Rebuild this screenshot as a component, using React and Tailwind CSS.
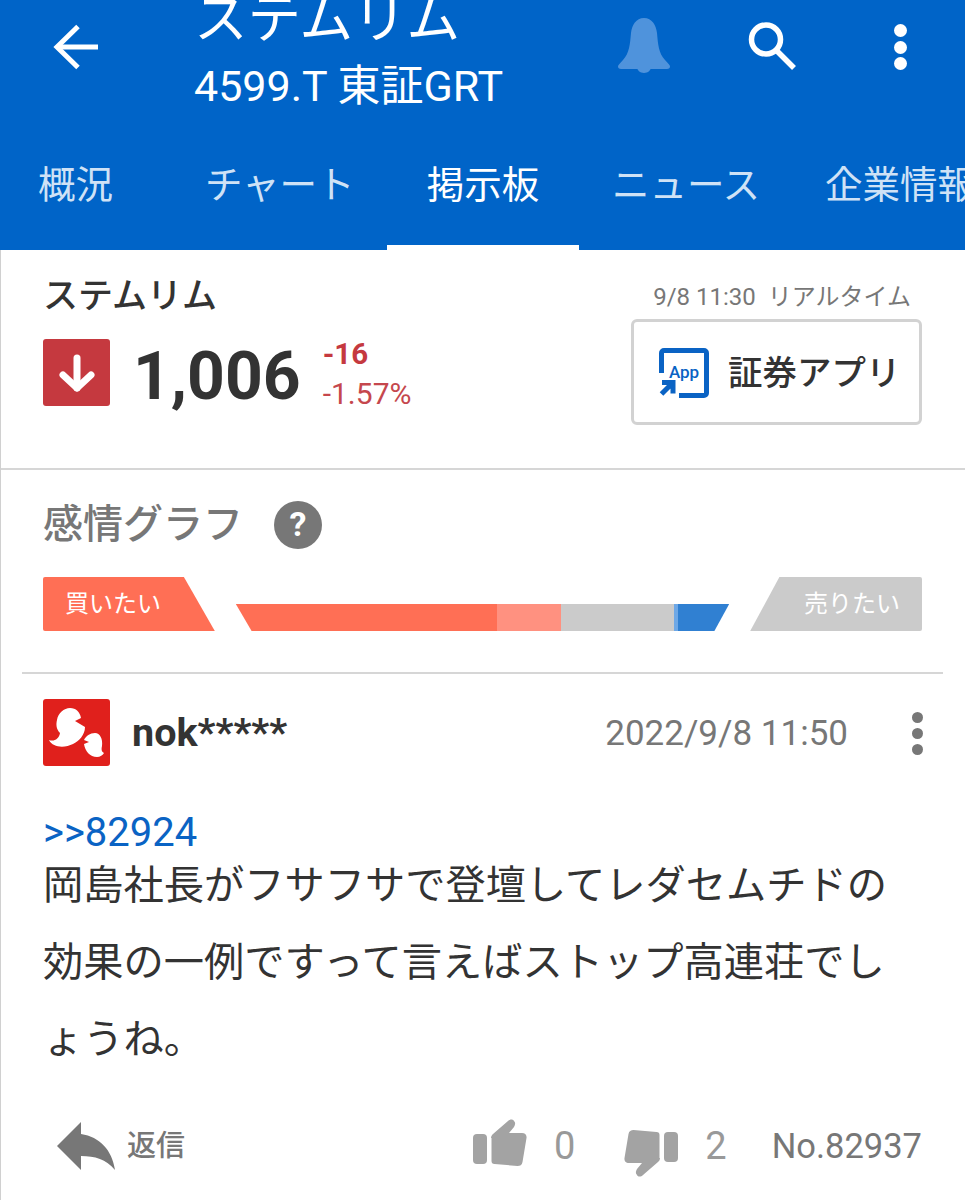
const FONT = { fontFamily: 'Roboto, "Noto Sans CJK JP", sans-serif' };

function BackArrow() {
  return (
    <svg width="48" height="48" viewBox="0 0 48 48" fill="none" stroke="#fff" strokeWidth="5">
      <path d="M46 24H6" />
      <path d="M26 3.500 5 24l21 20.500" />
    </svg>
  );
}

function Bell() {
  return (
    <svg width="54" height="55" viewBox="0 0 54 55" fill="#4f93dc">
      <path d="M27 0c8 0 12 7 13 15 1 11 1.500 20 8 27 3 3.200 5 5 5 6.500 0 1.500-1 2.500-3 2.500H4c-2 0-3-1-3-2.500C1 47 3 45.200 6 42c6.500-7 7-16 8-27C15 7 19 0 27 0Z" />
      <path d="M20 49h14c0 3-3 6-7 6s-7-3-7-6Z" />
    </svg>
  );
}

function Search() {
  return (
    <svg width="50" height="50" viewBox="0 0 50 50" fill="none" stroke="#fff" strokeWidth="5.500">
      <circle cx="19" cy="18.500" r="14.500" />
      <path d="M29 29 47 47" />
    </svg>
  );
}

function Dots({ color, size, gap }) {
  return (
    <div className="flex flex-col items-center" style={{ gap }}>
      {[0, 1, 2].map((i) => (
        <span key={i} className="block rounded-full" style={{ width: size, height: size, background: color }} />
      ))}
    </div>
  );
}

function AppMark() {
  return (
    <svg width="50" height="50" viewBox="0 0 50 50" fill="none">
      <path d="M2.500 25V5a2.500 2.500 0 0 1 2.500-2.500h40A2.500 2.500 0 0 1 47.500 5v40a2.500 2.500 0 0 1-2.500 2.500H20" stroke="#0a63c4" strokeWidth="5" />
      <text x="25" y="30" textAnchor="middle" fontSize="17" fontWeight="500" fill="#0a63c4" fontFamily="Roboto, sans-serif">App</text>
      <path d="M2.500 46 12 36.500M3 34.500h11v11" stroke="#0a63c4" strokeWidth="5" />
    </svg>
  );
}

function DownBadge() {
  return (
    <div className="flex h-[67px] w-[67px] items-center justify-center rounded-[3px] bg-[#c5393f]">
      <svg width="38" height="42" viewBox="0 0 38 42" fill="none" stroke="#fff" strokeWidth="7" strokeLinecap="round" strokeLinejoin="round">
        <path d="M19 6v30" />
        <path d="M5 23l14 13 14-13" />
      </svg>
    </div>
  );
}

function Avatar() {
  return (
    <div className="h-[67px] w-[67px] rounded-[3px] bg-[#e0201c]">
      <svg width="67" height="67" viewBox="0 0 67 67" fill="#fff">
        <path d="M6 41C11 43 16 40 17 34 13 30 13 25 14 21 15 14 21 9 27 9 33 9 37 13 38 19L32 22 42 28C42 36 36 42 30 45 22 49 10 49 6 41Z" />
        <path d="M52 34C47 34 43 37 41 41L46 43 41 45C42 52 47 58 54 58 57 58 60 56 61 54 59 53 58 51 59 47 60 40 57 34 52 34Z" />
      </svg>
    </div>
  );
}

function Thumb({ down }) {
  return (
    <svg width="56" height="50" viewBox="0 0 56 50" fill="#a3a3a3" style={down ? { transform: 'rotate(180deg)' } : undefined}>
      <rect x="1" y="16" width="14" height="30" rx="4" />
      <path d="M19 20c0-2 1-3 2-4l15-13c2-2 5-2 6 0 2 2 1 4 0 6l-5 6h13c3 0 5 2 4.500 5l-4 24c-.5 3-2.500 4-5 4l-23-2c-2 0-3-1-3-3V20Z" />
    </svg>
  );
}

export default function App() {
  const tabs = [
    ['概況', 'w-[150px] pl-[38px]', false],
    ['チャート', 'w-[237px] pl-[55px]', false],
    ['掲示板', 'w-[192px] justify-center', true],
    ['ニュース', 'w-[214px] pl-[33px]', false],
    ['企業情報', 'flex-1 pl-[32px]', false],
  ];
  return (
    <div className="h-[1200px] w-[965px] overflow-hidden bg-white text-[#333]" style={FONT}>
      <header className="h-[250px] overflow-hidden bg-[#0064c8] text-white">
        <div className="flex h-[140px] items-start">
          <div className="flex w-[194px] shrink-0 pl-[52px] pt-[23px]"><BackArrow /></div>
          <div className="w-[400px] shrink-0">
            <div className="mt-[-14px] h-[68px] text-[53.500px] leading-[68px]">ステムリム</div>
            <div className="mt-[7px] text-[43px] leading-[50px]">4599.T 東証GRT</div>
          </div>
          <div className="ml-[23px] pt-[18px]"><Bell /></div>
          <div className="ml-[76px] pt-[21px]"><Search /></div>
          <div className="ml-[97px] pt-[24px]"><Dots color="#fff" size={13} gap="3.500px" /></div>
        </div>
        <nav className="flex h-[110px] text-[37.500px] leading-none">
          {tabs.map(([label, cls, active]) => (
            <div key={label} className={`flex shrink-0 items-start whitespace-nowrap pt-[27px] ${cls} ${active ? 'border-b-[5px] border-white text-white' : 'text-[#cfe2f6]'}`}>
              {label}
            </div>
          ))}
        </nav>
      </header>

      <main className="h-[950px] border-l border-[#d0d0d0]">
        <section className="h-[220px] border-b-[2px] border-[#d6d6d6] pl-[42px] pr-[43px]">
          <div className="flex h-[71px] items-end justify-between">
            <div className="pb-[1px] text-[35px] font-medium leading-[46px]">ステムリム</div>
            <div className="mr-[11px] pb-[8px] text-[24px] leading-[32px] text-[#777]">9/8 11:30&nbsp; リアルタイム</div>
          </div>
          <div className="flex items-start">
            <div className="mt-[18px]"><DownBadge /></div>
            <div className="ml-[23px] mt-[16px] text-[66px] font-bold leading-[80px]">1,006</div>
            <div className="ml-[22px] mt-[17px]">
              <div className="text-[29.500px] font-bold leading-[32px] text-[#c5393f]">-16</div>
              <div className="mt-[8px] text-[30px] leading-[32px] text-[#c5474d]">-1.57%</div>
            </div>
            <div className="ml-auto mt-[-2px] flex h-[106px] w-[291px] items-center gap-[19px] rounded-[6px] border-[3px] border-[#d2d2d2] pl-[25px] pt-[2px]">
              <AppMark />
              <span className="text-[34.500px] font-medium leading-none">証券アプリ</span>
            </div>
          </div>
        </section>

        <section className="h-[203px] pl-[42px] pr-[43px]">
          <div className="flex h-[107px] items-center gap-[31px] pt-[2px]">
            <span className="text-[40px] font-medium leading-none text-[#777]">感情グラフ</span>
            <span className="flex h-[48px] w-[48px] items-center justify-center rounded-full bg-[#777] text-[34px] font-bold text-white">?</span>
          </div>
          <div className="flex h-[54px] items-end justify-between">
            <div className="flex h-[54px] w-[172px] items-center rounded-l-[2px] bg-[#ff6f55] pb-[1px] pl-[22px] text-[24px] text-white [clip-path:polygon(0_0,82%_0,100%_100%,0_100%)]">買いたい</div>
            <div className="ml-[21px] flex h-[27px] w-[494px] [clip-path:polygon(0_0,100%_0,97%_100%,3.200%_100%)]">
              <span className="w-[261px] bg-[#ff6f55]" />
              <span className="w-[64px] bg-[#ff9180]" />
              <span className="w-[113px] bg-[#cbcbcb]" />
              <span className="w-[4px] bg-[#6ea8e6]" />
              <span className="flex-1 bg-[#3080d2]" />
            </div>
            <div className="ml-[21px] flex h-[54px] w-[172px] items-center justify-end rounded-r-[2px] bg-[#cbcbcb] pb-[1px] pr-[22px] text-[24px] text-white [clip-path:polygon(17%_0,100%_0,100%_100%,0_100%)]">売りたい</div>
          </div>
        </section>

        <article>
          <div className="ml-[21px] mr-[22px] mt-[-1px] border-t-[2px] border-[#d6d6d6]" />
          <div className="pl-[42px] pr-[43px]">
            <div className="mt-[25px] flex h-[67px] items-center">
              <Avatar />
              <span className="ml-[22px] text-[39.500px] font-bold leading-none">nok*****</span>
              <span className="ml-auto mt-[2px] text-[35px] leading-none text-[#777]">2022/9/8 11:50</span>
              <div className="ml-[64px] mr-[-1px] mt-[1px]"><Dots color="#777" size={11} gap="5px" /></div>
            </div>
            <div className="mt-[45px] text-[40px] leading-[44px] text-[#0a63c4]">&gt;&gt;82924</div>
            <p className="mt-[-8px] text-[40.250px] leading-[77px]">
              岡島社長がフサフサで登壇してレダセムチドの<br />
              効果の一例ですって言えばストップ高連荘でし<br />
              ょうね。
            </p>
            <div className="mt-[43px] flex items-center text-[#777]">
              <svg className="ml-[13px]" width="60" height="50" viewBox="0 0 60 50" fill="#777">
                <path d="M25 1 1 25l24 24V35c14 0 25 3 34 14C56 29 44 16 25 13V1Z" />
              </svg>
              <span className="ml-[11px] text-[29px] font-medium leading-none">返信</span>
              <div className="ml-auto flex items-center">
                <div className="translate-y-[-3px]"><Thumb /></div>
                <span className="ml-[26px] text-[38px] leading-none text-[#999]">0</span>
                <div className="ml-[48px] translate-y-[7px]"><Thumb down /></div>
                <span className="ml-[26px] text-[38px] leading-none text-[#999]">2</span>
                <span className="ml-[45px] text-[34.500px] leading-none">No.82937</span>
              </div>
            </div>
          </div>
        </article>
      </main>
    </div>
  );
}
